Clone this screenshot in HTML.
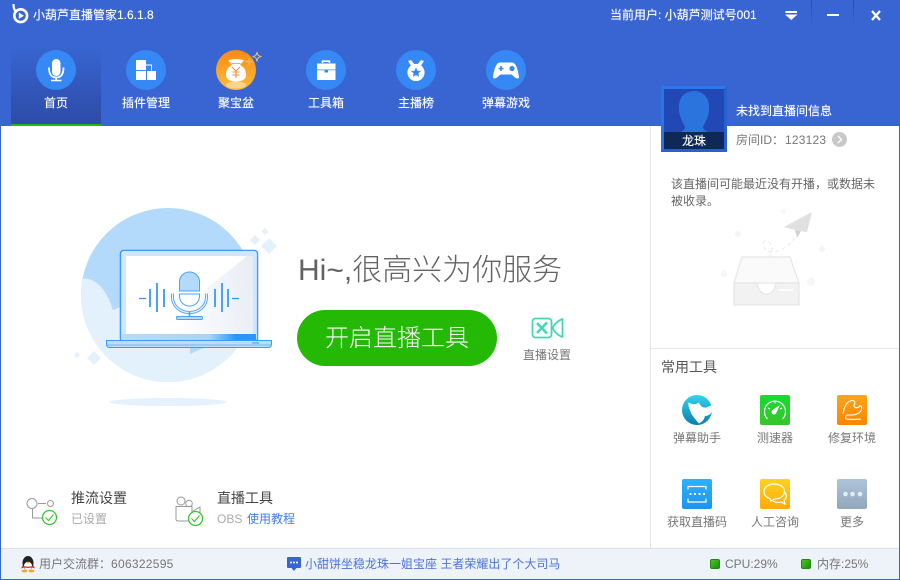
<!DOCTYPE html>
<html lang="zh">
<head>
<meta charset="utf-8">
<title>小葫芦直播管家</title>
<style>
html,body{margin:0;padding:0;background:#fff}
#app{position:relative;width:900px;height:580px;overflow:hidden;background:#fff;font-family:"Liberation Sans","Noto Sans CJK SC",sans-serif;font-size:12px;color:#666}
.t{position:absolute;white-space:nowrap;line-height:18px;height:18px}
.c{transform:translateX(-50%)}
.b{position:absolute;background:#3965d2}
.w{color:#fff;text-shadow:0 0 .6px rgba(255,255,255,.7)}
svg{position:absolute;overflow:visible}
.l{color:#777}
.p{font-family:"Liberation Sans","Noto Sans CJK TC",sans-serif}
</style>
</head>
<body>
<div id="app">
<!-- header -->
<div class="b" style="left:0;top:0;width:900px;height:126px"></div>
<div style="position:absolute;left:11px;top:45px;width:90px;height:79px;background:linear-gradient(#3965d2,#2c4ca8)"></div>
<div style="position:absolute;left:11px;top:124px;width:90px;height:2px;background:#22b70a"></div>
<!-- frame -->
<div class="b" style="left:0;top:126px;width:1px;height:454px"></div>
<div class="b" style="left:899px;top:126px;width:1px;height:454px"></div>
<!-- status bar -->
<div style="position:absolute;left:1px;top:548px;width:898px;height:30px;background:#eef3f9;border-top:1px solid #d6e0ea"></div>
<div class="b" style="left:0;top:579px;width:900px;height:1px"></div>
<!-- right panel lines -->
<div style="position:absolute;left:650px;top:126px;width:1px;height:422px;background:#e2e5e9"></div>
<div style="position:absolute;left:651px;top:348px;width:248px;height:1px;background:#e6e8eb"></div>

<!-- logo -->
<svg style="left:10px;top:3px" width="20" height="22" viewBox="0 0 20 22">
<circle cx="10.7" cy="12.7" r="6.4" fill="none" stroke="#fff" stroke-width="2.6"/>
<path d="M3.5 1C3.5 4 3.800 6 5.500 8.500" fill="none" stroke="#fff" stroke-width="2.2"/>
<path d="M8.800 9.500L14 12.700L8.800 15.900Z" fill="#fff"/>
</svg>
<span class="t w" style="left:33px;top:6px">小葫芦直播管家1.6.1.8</span>
<span class="t w" style="left:610px;top:6px">当前用户: 小葫芦测试号001</span>
<svg style="left:785px;top:10px" width="13" height="11" viewBox="0 0 13 11"><rect x="0.500" y="1" width="11.500" height="2" fill="#fff"/><path d="M0 4.500H12.500L6.250 10Z" fill="#fff"/></svg>
<div style="position:absolute;left:811px;top:0;width:1px;height:28px;background:linear-gradient(#2b4ea8,#3965d2)"></div>
<div style="position:absolute;left:853px;top:0;width:1px;height:28px;background:linear-gradient(#2b4ea8,#3965d2)"></div>
<div style="position:absolute;left:827px;top:14px;width:12px;height:2px;background:#fff"></div>
<svg style="left:871px;top:10px" width="10" height="11" viewBox="0 0 10 11"><path d="M1 1L9 10M9 1L1 10" stroke="#fff" stroke-width="2.2" fill="none"/></svg>

<!-- nav icons -->
<svg style="left:36px;top:50px" width="40" height="40" viewBox="0 0 40 40">
<circle cx="20" cy="20" r="20" fill="#3688f4"/>
<rect x="16" y="9" width="8.500" height="17" rx="4.200" fill="#fff"/>
<path d="M13 17.500C13 25 16 27.500 20.200 27.500S27.500 25 27.500 17.500" fill="none" stroke="#fff" stroke-width="1.800"/>
<path d="M20.200 27V30M15 30.500H25.500" stroke="#fff" stroke-width="1.600" fill="none"/>
</svg>
<svg style="left:126px;top:50px" width="40" height="40" viewBox="0 0 40 40">
<circle cx="20" cy="20" r="20" fill="#3688f4"/>
<path d="M10 10H20V20H10ZM10 21H20V30H10ZM21 21H30V30H21Z" fill="#fff"/>
<path d="M20 15H25.500V20.500" fill="none" stroke="#fff" stroke-width="1"/>
</svg>
<svg style="left:216px;top:50px" width="48" height="40" viewBox="0 0 48 40">
<defs><linearGradient id="g1" x1="0" y1="0" x2="0" y2="1"><stop offset="0" stop-color="#f88b10"/><stop offset="1" stop-color="#fdbb3f"/></linearGradient></defs>
<circle cx="20" cy="20" r="20" fill="url(#g1)"/>
<ellipse cx="20" cy="35" rx="10" ry="3.500" fill="#fdd58a"/>
<path d="M10 25C10 19 13 16.500 16 15L12.500 10.500C16 8.500 24 8.500 28 10.500L24 15C27 16.500 30 19 30 25C30 29.500 26 31.500 20 31.500S10 29.500 10 25Z" fill="#fff"/>
<path d="M15.500 13.500H24.500" stroke="#f0913a" stroke-width=".8"/>
<path d="M16 17L20 21L24 17M20 21V28M16.500 22H23.500M16.500 25H23.500" stroke="#f0913a" stroke-width="1.100" fill="none"/>
<path d="M32 8H34V10.500H36.500V12.500H34V15H32V12.500H29.500V10.500H32Z" fill="#fbb44a"/>
<path d="M41 2C41.500 5 42 6 45.500 6.500C42 7 41.500 8.500 41 11.500C40.500 8.500 40 7 36.500 6.500C40 6 40.500 5 41 2Z" fill="none" stroke="#e9c26f" stroke-width="1"/>
</svg>
<svg style="left:306px;top:50px" width="40" height="40" viewBox="0 0 40 40">
<circle cx="20" cy="20" r="20" fill="#3688f4"/>
<path d="M16.500 13V11.200H23.500V13" fill="none" stroke="#fff" stroke-width="1.600"/>
<path d="M11 13.500H29.500V19.500H11ZM11 20.300H18.500V22.500H22V20.300H29.500V30H11Z" fill="#fff"/>
</svg>
<svg style="left:396px;top:50px" width="40" height="40" viewBox="0 0 40 40">
<circle cx="20" cy="20" r="20" fill="#3688f4"/>
<path d="M12 11L15 10L19 15L15.500 16.500ZM28 11L25 10L21 15L24.500 16.500Z" fill="#fff"/>
<circle cx="20" cy="22.500" r="8.600" fill="#fff"/>
<path d="M20 17.500L21.500 20.700L25 21.100L22.400 23.400L23.100 26.800L20 25.100L16.900 26.800L17.600 23.400L15 21.100L18.500 20.700Z" fill="#3688f4"/>
</svg>
<svg style="left:486px;top:50px" width="40" height="40" viewBox="0 0 40 40">
<circle cx="20" cy="20" r="20" fill="#3688f4"/>
<path d="M14 12.500H26C30 12.500 32 20 33 27C33 29 31 28.800 29 27.500L25.500 24.500H14.500L11 27.500C9 28.800 7 29 7 27C8 20 10 12.500 14 12.500Z" fill="#fff"/>
<path d="M12.500 18.500H17.500M15 16V21" stroke="#3688f4" stroke-width="1.600"/>
<circle cx="26" cy="18.500" r="2.600" fill="#3688f4"/>
</svg>
<span class="t w c" style="left:56px;top:94px">首页</span>
<span class="t w c" style="left:146px;top:94px">插件管理</span>
<span class="t w c" style="left:236px;top:94px">聚宝盆</span>
<span class="t w c" style="left:326px;top:94px">工具箱</span>
<span class="t w c" style="left:416px;top:94px">主播榜</span>
<span class="t w c" style="left:506px;top:94px">弹幕游戏</span>

<!-- avatar -->
<div style="position:absolute;left:661px;top:86px;width:60px;height:60px;border:3px solid #2a5fd0;border-top-color:#2a78ee;border-left-color:#2a74e8;background:#2148b5;overflow:hidden">
<svg style="left:0;top:0" width="60" height="60" viewBox="0 0 60 60">
<path d="M30 2C40 2 46 10 45 20C45 28 41 33 39 38C39 42 44 44 60 47V60H0V47C16 44 21 42 21 38C19 33 15 28 15 20C14 10 20 2 30 2Z" fill="#2b74de"/>
<rect x="0" y="43" width="60" height="17" fill="#0d2450" opacity=".94"/>
</svg>
<span class="t w c" style="left:30px;top:44px;font-size:12px;line-height:16px">龙珠</span>
</div>
<span class="t w" style="left:736px;top:102px">未找到直播间信息</span>
<span class="t" style="left:736px;top:131px;color:#777">房间ID<span class="p">：</span><span style="letter-spacing:.2px;margin-left:1px">123123</span></span>
<svg style="left:832px;top:132px" width="15" height="15" viewBox="0 0 15 15"><circle cx="7.500" cy="7.500" r="7.500" fill="#c8c8c8"/><path d="M6 4L9.500 7.500L6 11" stroke="#fff" stroke-width="1.300" fill="none"/></svg>
<span class="t" style="left:671px;top:175px;color:#666">该直播间可能最近没有开播<span class="p">，</span>或数据未</span>
<span class="t" style="left:671px;top:192px;color:#666">被收录。</span>

<!-- empty illustration -->
<svg style="left:0;top:0" width="900" height="580" viewBox="0 0 900 580">
<circle cx="783" cy="211" r="2.500" fill="#f7f7f7"/><circle cx="724" cy="274" r="3.500" fill="#f7f7f7"/><circle cx="811" cy="282" r="4" fill="#f7f7f7"/>
<path d="M738 230l4 4-4 4-4-4z M822 245l4 4-4 4-4-4z" fill="#f5f5f5"/>
<path d="M812 212L784 227L795 230L807 232Z" fill="#e0e0e0"/><path d="M795 230L797 238L801 231Z" fill="#d2d2d2"/>
<path d="M758 267C768 260 776 250 770 243C762 235 760 250 770 252C782 252 792 244 797 234" fill="none" stroke="#e8e8e8" stroke-width="1" stroke-dasharray="4 3"/>
<path d="M742 257H790L799 283H734Z" fill="#fafafa" stroke="#e8e8e8" stroke-width="1.300" stroke-linejoin="round"/>
<path d="M734 283H757C759 298 774 298 776 283H799V305H734Z" fill="#f2f2f2" stroke="#e6e6e6" stroke-width="1.300" stroke-linejoin="round"/>
<path d="M779 290H793" stroke="#fff" stroke-width="1.500"/>
</svg>

<!-- laptop illustration -->
<svg style="left:0;top:0" width="900" height="580" viewBox="0 0 900 580">
<defs>
<clipPath id="cc"><circle cx="168" cy="295" r="87"/></clipPath>
<linearGradient id="sh" gradientUnits="userSpaceOnUse" x1="170" y1="300" x2="253" y2="290"><stop offset="0" stop-color="#fff"/><stop offset="1" stop-color="#e9eef5"/></linearGradient>
<linearGradient id="lid" x1="0" y1="0" x2="1" y2="0"><stop offset="0" stop-color="#b7dbfb"/><stop offset=".65" stop-color="#a9d3fb"/><stop offset=".85" stop-color="#2a95fb"/></linearGradient>
</defs>
<ellipse cx="168" cy="402" rx="59" ry="4" fill="#e5f2fd"/>
<circle cx="168" cy="295" r="87" fill="#b3d9fb"/>
<g clip-path="url(#cc)"><path d="M81 279C95 276 107 290 113 310L125 305H260V390H70V280Z" fill="#e3f1fd"/><path d="M190 340L190 354L210 345Z" fill="#b3d9fb"/></g>
<path d="M269 238l8 8-8 8-8-8zM255 235l5 5-5 5-5-5zM265 228l3.500 3.500-3.500 3.500-3.500-3.500zM94 351l7 7-7 7-7-7zM77 352l3 3-3 3-3-3z" fill="#e3f1fd"/>
<rect x="120.500" y="250.500" width="137" height="91" rx="3" fill="#fff" stroke="#3a9bfb" stroke-width="1.600"/>
<rect x="122" y="252" width="134" height="88" rx="2" fill="#cfe6fc"/>
<rect x="126" y="256" width="127" height="78" fill="#fff"/>
<path d="M247 256H253V334H150Z" fill="url(#sh)"/>
<path d="M122 334H256V340H122Z" fill="url(#lid)"/>
<path d="M106.500 340.500H271.500V344C271.500 346.500 270 347.500 268 347.500H110C108 347.500 106.500 346.500 106.500 344Z" fill="#bbdefc" stroke="#3a9bfb" stroke-width="1"/>
<path d="M107 345H271" stroke="#6db5fb" stroke-width="1"/>
<path d="M252 343H259" stroke="#3a9bfb" stroke-width="1"/>
<g stroke="#2f93f8" stroke-width="1.300" fill="none">
<path d="M139 298.500H146M232 298.500H239"/>
<path d="M150 289V307M157 283V312M164 289V307M215 289V307M222 283V312M228 289V307" stroke-width="1.700"/>
</g>
<path d="M179.500 291V282C179.500 276 184 272 189.500 272S199.500 276 199.500 282V291Z" fill="#b3d9fb" stroke="#4aa3f9" stroke-width="1"/>
<path d="M179.500 294H199.500V296C199.500 302 195 306 189.500 306S179.500 302 179.500 296Z" fill="#fff" stroke="#4aa3f9" stroke-width="1"/>
<path d="M172.500 293.500V297C172.500 306 180 312.500 189.500 312.500S206.500 306 206.500 297V293.500" fill="none" stroke="#4aa3f9" stroke-width="3"/>
<path d="M172.500 293.500V297C172.500 306 180 312.500 189.500 312.500S206.500 306 206.500 297V293.500" fill="none" stroke="#e9f4fe" stroke-width="1.200"/>
<path d="M189.500 312V317" stroke="#4aa3f9" stroke-width="1.600"/>
<rect x="176.500" y="316.500" width="26" height="3" rx="1" fill="#b3d9fb" stroke="#4aa3f9" stroke-width="1"/>
</svg>

<!-- hero -->
<span class="t" style="left:298px;top:249px;height:44px;line-height:44px;font-size:30px;color:#636363;font-weight:300">Hi~,很高兴为你服务</span>
<div style="position:absolute;left:297px;top:310px;width:200px;height:56px;border-radius:28px;background:#23b905"></div>
<span class="t" style="left:325px;top:321px;height:36px;line-height:36px;font-size:24px;color:#fff;font-weight:300">开启直播工具</span>
<svg style="left:530px;top:317px" width="34" height="22" viewBox="0 0 34 22">
<rect x="2.500" y="1.500" width="19" height="19" rx="3" fill="none" stroke="#45d6b4" stroke-width="1.800"/>
<path d="M7 6L17 16.500M17 5.500L7 16" stroke="#45d6b4" stroke-width="2.600" fill="none"/>
<path d="M32.500 2V20C29 19 23 14 23 11C23 8 29 3 32.500 2Z" fill="none" stroke="#45d6b4" stroke-width="1.800" stroke-linejoin="round"/>
</svg>
<span class="t c" style="left:547px;top:346px;color:#777">直播设置</span>

<!-- bottom-left -->
<svg style="left:0;top:0" width="900" height="580" viewBox="0 0 900 580">
<g fill="none" stroke="#9a9a9a" stroke-width="1">
<circle cx="32" cy="503.500" r="5"/><circle cx="50.500" cy="503.500" r="3"/><path d="M38 503.500H46M32.500 509V518H43"/>
<circle cx="181" cy="501" r="4"/><circle cx="189" cy="503.500" r="3.300"/>
<path d="M176 506.500H192V521H178C176.500 521 176 520.500 176 519ZM193 511L200 507V515"/>
</g>
<circle cx="49.500" cy="517.500" r="7" fill="#fff" stroke="#35c72f" stroke-width="1.300"/><path d="M45.500 517.500L48.500 520.500L53.500 514.500" fill="none" stroke="#35c72f" stroke-width="1.100"/>
<circle cx="195.500" cy="518.500" r="7" fill="#fff" stroke="#35c72f" stroke-width="1.300"/><path d="M191.500 518.500L194.500 521.500L199.500 515.500" fill="none" stroke="#35c72f" stroke-width="1.100"/>
</svg>
<span class="t" style="left:71px;top:489px;font-size:14px;color:#444">推流设置</span>
<span class="t" style="left:71px;top:510px;color:#aaa">已设置</span>
<span class="t" style="left:217px;top:489px;font-size:14px;color:#444">直播工具</span>
<span class="t" style="left:217px;top:510px;color:#aaa">OBS</span>
<span class="t" style="left:247px;top:510px;color:#3f7ee8">使用教程</span>

<!-- tools -->
<span class="t" style="left:661px;top:358px;font-size:14px;color:#555">常用工具</span>
<svg style="left:682px;top:395px" width="30" height="30" viewBox="0 0 30 30">
<defs><linearGradient id="g2" x1="0" y1="0" x2="0" y2="1"><stop offset="0" stop-color="#33d4ec"/><stop offset="1" stop-color="#0a7db0"/></linearGradient></defs>
<circle cx="15" cy="15" r="15" fill="url(#g2)"/>
<path d="M6.500 7.500C9 9 12 9.500 14 9L17 7.500C18 11 21 13 24 12.500L29.500 10.500C30.500 13 30 15.500 29.500 17.500C28 19.500 26 21 23 21C22 25 20 27 17 28.500C14 25 9 20 8 15C7 13 6 10 6.500 7.500Z" fill="#fff"/>
</svg>
<svg style="left:760px;top:395px" width="30" height="30" viewBox="0 0 30 30">
<defs><linearGradient id="g3" x1="0" y1="0" x2="0" y2="1"><stop offset="0" stop-color="#12de2e"/><stop offset="1" stop-color="#39c42c"/></linearGradient></defs>
<rect width="30" height="30" rx="2" fill="url(#g3)"/>
<path d="M7.500 24A10.500 10.500 0 1 1 22.500 24" fill="none" stroke="#fff" stroke-width="1.200"/>
<path d="M15 6V8.500M8 13L10 14M22 13L20 14" stroke="#fff" stroke-width="1"/>
<path d="M20 10L16.500 17.500L13 14.500Z" fill="#fff"/><circle cx="14" cy="17" r="2.500" fill="#fff"/>
</svg>
<svg style="left:837px;top:395px" width="30" height="30" viewBox="0 0 30 30">
<defs><linearGradient id="g4" x1="0" y1="0" x2="0" y2="1"><stop offset="0" stop-color="#ffa418"/><stop offset="1" stop-color="#ff8400"/></linearGradient></defs>
<rect width="30" height="30" rx="2" fill="url(#g4)"/>
<path d="M6 19C7 13 9 6 15 5.500C18 5.500 18.500 8 17 10C17 13 21 14 23 10.500C25.500 11.500 25.500 15 22 18C18 20.500 14 20 11 20C9 20 8 22 9 24C13 24.500 19 24.500 24 24" fill="none" stroke="#fff" stroke-width="1.100"/>
</svg>
<svg style="left:682px;top:479px" width="30" height="30" viewBox="0 0 30 30">
<defs><linearGradient id="g5" x1="0" y1="0" x2="0" y2="1"><stop offset="0" stop-color="#2fb0fb"/><stop offset="1" stop-color="#1b94ef"/></linearGradient></defs>
<rect width="30" height="30" rx="2" fill="url(#g5)"/>
<path d="M6 10.500V7.500H24V10.500M6 19.500V23H24V19.500" fill="none" stroke="#fff" stroke-width="1.200"/>
<path d="M7.500 15H9.500M12 15H14M16.500 15H18.500M21 15H23" stroke="#fff" stroke-width="2"/>
</svg>
<svg style="left:760px;top:479px" width="30" height="30" viewBox="0 0 30 30">
<defs><linearGradient id="g6" x1="0" y1="0" x2="0" y2="1"><stop offset="0" stop-color="#fdd31a"/><stop offset="1" stop-color="#fcab0d"/></linearGradient></defs>
<rect width="30" height="30" rx="2" fill="url(#g6)"/>
<path d="M14 5C8.500 5 4 8 4 12.500C4 16 6.500 18.500 10 19.500L11 22L14.500 20C20 20 24.500 17 24.500 12.500C24.500 8 20 5 14 5Z" fill="none" stroke="#fff" stroke-width="1.200"/>
<path d="M24.500 13C27 15 27 19 24 21L25 25L21 23C19 24 15 23.500 13 22" fill="none" stroke="#fff" stroke-width="1.200"/>
</svg>
<svg style="left:837px;top:479px" width="30" height="30" viewBox="0 0 30 30">
<defs><linearGradient id="g7" x1="0" y1="0" x2="0" y2="1"><stop offset="0" stop-color="#aec4da"/><stop offset="1" stop-color="#93a7bb"/></linearGradient></defs>
<rect width="30" height="30" rx="2" fill="url(#g7)"/>
<circle cx="8.500" cy="15" r="2.300" fill="#e6ecf2"/><circle cx="15.500" cy="15" r="2.300" fill="#e6ecf2"/><circle cx="23" cy="15" r="2.300" fill="#e6ecf2"/>
</svg>
<span class="t c l" style="left:697px;top:429px">弹幕助手</span>
<span class="t c l" style="left:775px;top:429px">测速器</span>
<span class="t c l" style="left:852px;top:429px">修复环境</span>
<span class="t c l" style="left:697px;top:513px">获取直播码</span>
<span class="t c l" style="left:775px;top:513px">人工咨询</span>
<span class="t c l" style="left:852px;top:513px">更多</span>

<!-- status content -->
<svg style="left:20px;top:555px" width="16" height="18" viewBox="0 0 16 18">
<ellipse cx="8" cy="8" rx="5.500" ry="7" fill="#222"/>
<ellipse cx="8" cy="11" rx="4" ry="4" fill="#fff"/>
<path d="M2.500 10.500C4 12 12 12 13.500 10.500L15 13.500L12 12.500C11 13 5 13 4 12.500L1 13.500Z" fill="#e02a1c"/>
<ellipse cx="4.500" cy="16" rx="3" ry="1.400" fill="#f5a623"/><ellipse cx="11.500" cy="16" rx="3" ry="1.400" fill="#f5a623"/>
<path d="M6 6.800H10L8 8.500Z" fill="#f5a623"/>
</svg>
<span class="t" style="left:39px;top:555px;color:#777">用户交流群<span class="p">：</span><span style="letter-spacing:.28px">606322595</span></span>
<svg style="left:287px;top:557px" width="14" height="15" viewBox="0 0 14 15">
<path d="M1 0H13C13.600 0 14 .4 14 1V10C14 10.600 13.600 11 13 11H9.500L7 14L4.500 11H1C.4 11 0 10.600 0 10V1C0 .4 .4 0 1 0Z" fill="#3965d2"/>
<circle cx="4" cy="5.500" r="1" fill="#fff"/><circle cx="7" cy="5.500" r="1" fill="#fff"/><circle cx="10" cy="5.500" r="1" fill="#fff"/>
</svg>
<span class="t" style="left:305px;top:555px;color:#4a73dc">小甜饼坐稳龙珠一姐宝座 王者荣耀出了个大司马</span>
<div style="position:absolute;left:710px;top:559px;width:10px;height:10px;border-radius:2px;background:linear-gradient(135deg,#4fc22a,#1e8d08);border:.5px solid #1f8a10;box-sizing:border-box"></div>
<span class="t" style="left:725px;top:555px;color:#777">CPU:29%</span>
<div style="position:absolute;left:801px;top:559px;width:10px;height:10px;border-radius:2px;background:linear-gradient(135deg,#4fc22a,#1e8d08);border:.5px solid #1f8a10;box-sizing:border-box"></div>
<span class="t" style="left:817px;top:555px;color:#777">内存:25%</span>
</div>
</body>
</html>
